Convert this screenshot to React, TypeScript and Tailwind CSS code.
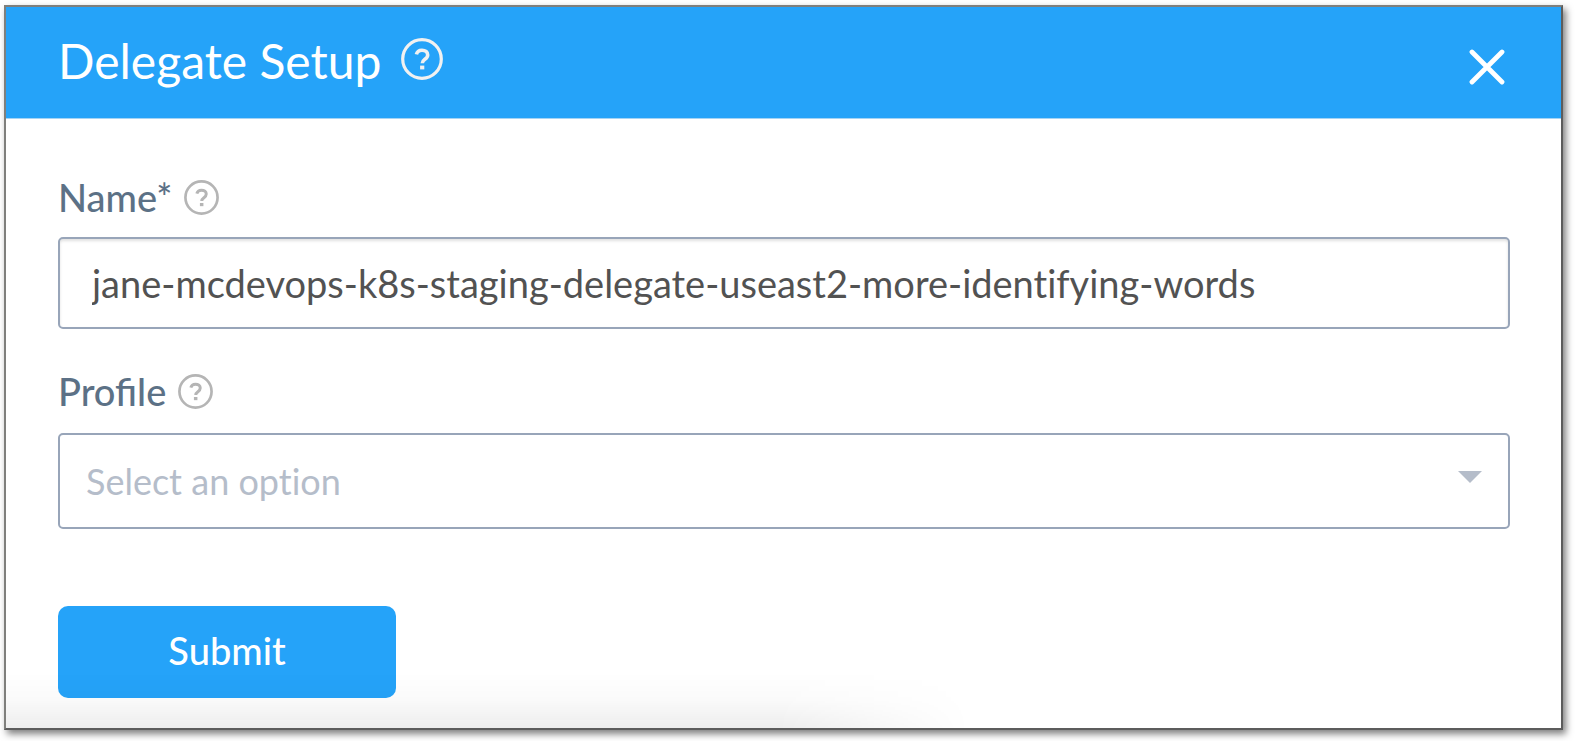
type HelpIconProps = { className: string };

function HelpIcon({ className }: HelpIconProps) {
  return (
    <svg viewBox="0 0 42 42" fill="none" stroke="currentColor" className={className} aria-hidden="true">
      <circle cx="21" cy="21" r="19.3" strokeWidth="3.2" />
      <path
        d="M15.4 16.4C16 13.7 18.2 12.2 21 12.2c3.3 0 5.7 1.9 5.7 4.7 0 4.5-5.4 4.2-5.4 8.3"
        strokeWidth="3.6"
      />
      <path d="M21.2 27.6v3.8" strokeWidth="4.2" />
    </svg>
  );
}

type FieldLabelProps = { htmlFor: string; text: string };

function FieldLabel({ htmlFor, text }: FieldLabelProps) {
  return (
    <div className="flex h-10 items-center gap-3">
      <label htmlFor={htmlFor} className="text-[38px] leading-10 font-medium text-[#5c7186]">
        {text}
      </label>
      <button type="button" aria-label={`Help for ${text}`} className="text-[#b5b5b5]">
        <HelpIcon className="size-[35px]" />
      </button>
    </div>
  );
}

export default function App() {
  return (
    <main className="bg-white pt-[5px] pr-3 pb-3 pl-1 font-['Lato','Open_Sans',sans-serif]">
      <section
        role="dialog"
        aria-labelledby="dialog-title"
        className="border-2 border-[#7f7f7c] border-r-[#5c5c5c] border-b-[#5c5c5c] bg-white shadow-[3px_4px_7px_rgba(0,0,0,0.5)]"
      >
        <header className="flex items-center justify-between border-b border-[#a5d4f5] bg-[#25a3f9] pr-14 pl-[52px] text-white">
          <div className="flex h-[111px] items-center gap-5 pb-2">
            <h1 id="dialog-title" className="pt-1 text-[48px] leading-[60px]">
              Delegate Setup
            </h1>
            <button type="button" aria-label="Help for Delegate Setup" className="text-[#f1f1f1]">
              <HelpIcon className="size-[42px]" />
            </button>
          </div>
          <button type="button" aria-label="Close" className="mt-2">
            <svg viewBox="0 0 36 36" className="size-9" aria-hidden="true">
              <path d="M3 3l30 30M33 3L3 33" stroke="currentColor" strokeWidth="4.8" strokeLinecap="round" />
            </svg>
          </button>
        </header>
        <form
          onSubmit={(event) => event.preventDefault()}
          className="relative pt-[58px] pr-[51px] pb-[30px] pl-[52px]"
        >
          <div
            aria-hidden="true"
            className="pointer-events-none absolute bottom-0 left-0 h-14 w-[62%] bg-linear-to-t from-black/7 via-black/2 to-transparent mask-r-from-80%"
          />
          <FieldLabel htmlFor="delegate-name" text="Name*" />
          <input
            id="delegate-name"
            type="text"
            defaultValue="jane-mcdevops-k8s-staging-delegate-useast2-more-identifying-words"
            className="mt-5 block h-[92px] w-full rounded-[5px] border-2 border-[#98a5b9] bg-white px-8 text-[38px] text-[#525252] shadow-[inset_0_2px_3px_rgba(0,0,0,0.12)] outline-none [font-variant-ligatures:none]"
          />
          <div className="mt-[42px]">
            <FieldLabel htmlFor="delegate-profile" text="Profile" />
          </div>
          <div className="mt-[22px] grid items-center">
            <select
              id="delegate-profile"
              defaultValue=""
              className="col-start-1 row-start-1 h-24 w-full appearance-none rounded-[5px] border-2 border-[#98a5b9] bg-white px-[26px] text-[36px] text-[#b5bdca] outline-none [font-variant-ligatures:none]"
            >
              <option value="">Select an option</option>
            </select>
            <svg
              viewBox="0 0 24 12"
              className="pointer-events-none col-start-1 row-start-1 mr-7 mb-2 h-3 w-6 justify-self-end"
              aria-hidden="true"
            >
              <path d="M0 0h24L12 12z" fill="#b5bdca" />
            </svg>
          </div>
          <button
            type="submit"
            className="mt-[77px] block h-[92px] w-[338px] rounded-[10px] bg-[#25a3f9] pb-1 text-[38px] font-medium text-white"
          >
            Submit
          </button>
        </form>
      </section>
    </main>
  );
}
